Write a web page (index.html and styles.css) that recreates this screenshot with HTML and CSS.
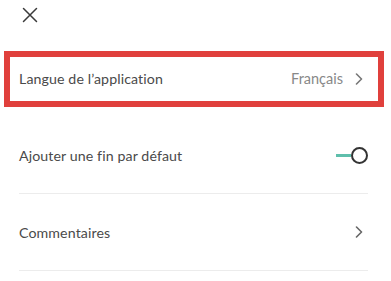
FILE: index.html
```html
<!DOCTYPE html>
<html lang="fr">
<head>
  <meta charset="UTF-8" />
  <title>Paramètres</title>
  <link rel="stylesheet" href="styles.css">
</head>
<body>

  <div class="topbar">
    <button class="close" aria-label="Fermer">
      <svg width="16" height="16" viewBox="0 0 16 16">
        <path d="M1.5 1.5 L14.5 14.5 M14.5 1.5 L1.5 14.5" stroke="#3a3a3a" stroke-width="1.5" fill="none" stroke-linecap="round"/>
      </svg>
    </button>
  </div>

  <div class="settings">
    <div class="row highlight">
      <span class="label">Langue de l’application</span>
      <span class="value">Français</span>
      <svg class="chevron" width="8" height="12" viewBox="0 0 8 12">
        <path d="M1.5 1 L6.5 6 L1.5 11" stroke="#777" stroke-width="1.6" fill="none" stroke-linecap="round" stroke-linejoin="round"/>
      </svg>
    </div>

    <div class="row bordered">
      <span class="label">Ajouter une fin par défaut</span>
      <span class="toggle">
        <span class="track"></span>
        <span class="knob"></span>
      </span>
    </div>

    <div class="row bordered">
      <span class="label">Commentaires</span>
      <svg class="chevron" width="8" height="12" viewBox="0 0 8 12">
        <path d="M1.5 1 L6.5 6 L1.5 11" stroke="#666" stroke-width="1.6" fill="none" stroke-linecap="round" stroke-linejoin="round"/>
      </svg>
    </div>
  </div>

</body>
</html>
```

FILE: styles.css
```css
body {
  margin: 0;
  background: #fff;
  font-family: Lato, "Noto Sans", sans-serif;
  color: #4a4a4a;
}

.topbar {
  height: 40px;
  padding-left: 22px;
  display: flex;
  align-items: flex-start;
}

.close {
  border: none;
  background: none;
  padding: 0;
  margin-top: 7px;
  width: 16px;
  height: 16px;
  cursor: pointer;
}

.close svg { display: block; }

.row {
  position: relative;
  height: 77px;
  box-sizing: border-box;
  margin: 0 23px 0 19px;
  display: flex;
  align-items: center;
  font-size: 14.2px;
}

.bordered {
  border-bottom: 1px solid #ececec;
}

.label {
  flex: 1;
  letter-spacing: 0.1px;
}

.value {
  color: #888;
  font-size: 14.5px;
  margin-right: 12px;
}

.chevron {
  margin-right: 5px;
  display: block;
}

/* annotation frame around the first row */
.highlight::after {
  content: "";
  position: absolute;
  left: -15px;
  right: -16px;
  top: 11px;
  height: 56px;
  box-sizing: border-box;
  border: 6px solid #e0403c;
}

.toggle {
  display: flex;
  align-items: center;
}

.track {
  width: 15px;
  height: 3px;
  background: #5fbfac;
}

.knob {
  width: 17px;
  height: 17px;
  box-sizing: border-box;
  border: 2px solid #333;
  border-radius: 50%;
  background: #fff;
}
```
